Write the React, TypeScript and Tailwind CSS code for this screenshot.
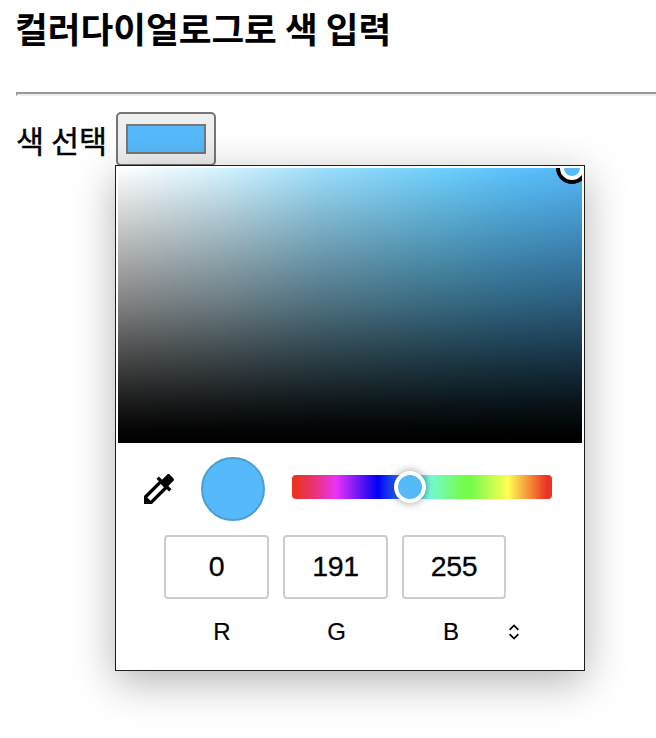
const COLOR = "#56b9f9";

const CHANNELS = [
  { label: "R", value: 0, width: "w-[105px]", labelWidth: "w-[116px]" },
  { label: "G", value: 191, width: "w-[105px]", labelWidth: "w-[113px]" },
  { label: "B", value: 255, width: "w-[104px]", labelWidth: "w-[116px]" },
];

function SaturationArea() {
  return (
    <div className="relative h-[275px] overflow-hidden bg-[linear-gradient(to_right,#ffffff,#d4f3ff_22%,#9bdefc_44%,#6dcffc_70%,#5cc2fc_85%,#54b7f8)]">
      <div className="h-full bg-[linear-gradient(to_bottom,transparent,rgba(0,0,0,0.5)_50%,rgba(0,0,0,0.73)_70%,rgba(0,0,0,0.9)_86%,rgba(0,0,0,0.98)_95%,#000000)]" />
      {/* handle, clipped by the corner */}
      <div className="absolute -top-4 right-[-6px] h-8 w-8 rounded-full border-4 border-black bg-white p-1">
        <div className="h-full w-full rounded-full bg-[#56b9f9]" />
      </div>
    </div>
  );
}

function HueSlider() {
  return (
    <div className="relative mt-[18px] ml-[27px] h-6 w-[260px] rounded-[4px] bg-[linear-gradient(to_right,#eb3323_2%,#ea3389_10%,#ea33f7_17%,#0000f5_33%,#2f6bee_41%,#75fbd4_53%,#75fb4c_66%,#75fb4c_69%,#ffff54_83%,#eb3323_98%)]">
      <div className="absolute top-[-4px] left-[102px] h-8 w-8 rounded-full border-4 border-white bg-[#56b9f9] shadow-[0_0_8px_rgba(0,0,0,0.4)]" />
    </div>
  );
}

function ColorDialog() {
  return (
    <div className="absolute top-[53px] left-[-1px] z-10 h-[506px] w-[470px] border border-[#1e1e1e] bg-white p-0.5 shadow-[0_11px_40px_rgba(0,0,0,0.3)]">
      <SaturationArea />

      <div className="flex pt-3.5 pl-[21px]">
        <svg className="mt-3 h-10 w-10" viewBox="0 0 24 24" fill="#000">
          <path d="M20.71 5.63l-2.34-2.34c-.39-.39-1.02-.39-1.41 0l-3.12 3.12-1.93-1.91-1.41 1.41 1.42 1.42L3 16.25V21h4.75l8.92-8.92 1.42 1.42 1.41-1.41-1.92-1.92 3.12-3.12c.4-.4.4-1.03.01-1.42zM6.92 19L5 17.08l8.06-8.06 1.92 1.92L6.92 19z" />
        </svg>
        <div className="ml-[22px] h-16 w-16 rounded-full border-2 border-[#4b9fd3] bg-[#56b9f9]" />
        <HueSlider />
      </div>

      <div className="mt-3.5 flex gap-3.5 pl-[46px]">
        {CHANNELS.map((c) => (
          <div
            key={c.label}
            className={`flex h-16 items-center justify-center rounded-[4px] border-2 border-[#cccccc] pb-0.5 text-[28.5px] tracking-[-0.3px] [-webkit-text-stroke:0.3px_#000] ${c.width}`}
          >
            {c.value}
          </div>
        ))}
      </div>

      <div className="mt-[17px] flex items-center pl-[46px]">
        {CHANNELS.map((c) => (
          <div
            key={c.label}
            className={`text-center text-[24px] leading-8 [-webkit-text-stroke:0.2px_#000] ${c.labelWidth}`}
          >
            {c.label}
          </div>
        ))}
        <svg className="h-4 w-2.5" viewBox="0 0 10 16" fill="none" stroke="#000" strokeWidth="1.7">
          <path d="M0.6 5.8L5 1.4l4.4 4.4M0.6 10.2L5 14.6l4.4-4.4" />
        </svg>
      </div>
    </div>
  );
}

export default function App() {
  return (
    <main className="h-[738px] w-full overflow-hidden bg-white pl-4 font-['Liberation_Sans','Noto_Sans_CJK_KR',sans-serif] text-black">
      <h3 className="-ml-px h-[92px] pt-0.5 font-['Noto_Sans_CJK_KR',sans-serif] text-[35.6px] leading-[52px] font-bold whitespace-nowrap">
        컬러다이얼로그로 색 입력
      </h3>
      <hr className="h-1 border-t-2 border-b-2 border-l-2 border-t-[#9a9a9a] border-b-[#eeeeee] border-l-[#9a9a9a]" />
      <div className="flex pt-4">
        <label className="w-[100px] pt-[3px] font-['Noto_Sans_CJK_KR',sans-serif] text-[30.5px] leading-[50px] whitespace-nowrap [-webkit-text-stroke:0.4px_#000]">
          색 선택
        </label>
        <div className="relative">
          <button className="flex h-[54px] w-[100px] items-center justify-center rounded-[5px] border-2 border-[#767676] bg-[#efefef]">
            <span
              className="h-[30px] w-20 border-2 border-[#777777]"
              style={{ backgroundColor: COLOR }}
            />
          </button>
          <ColorDialog />
        </div>
      </div>
    </main>
  );
}
